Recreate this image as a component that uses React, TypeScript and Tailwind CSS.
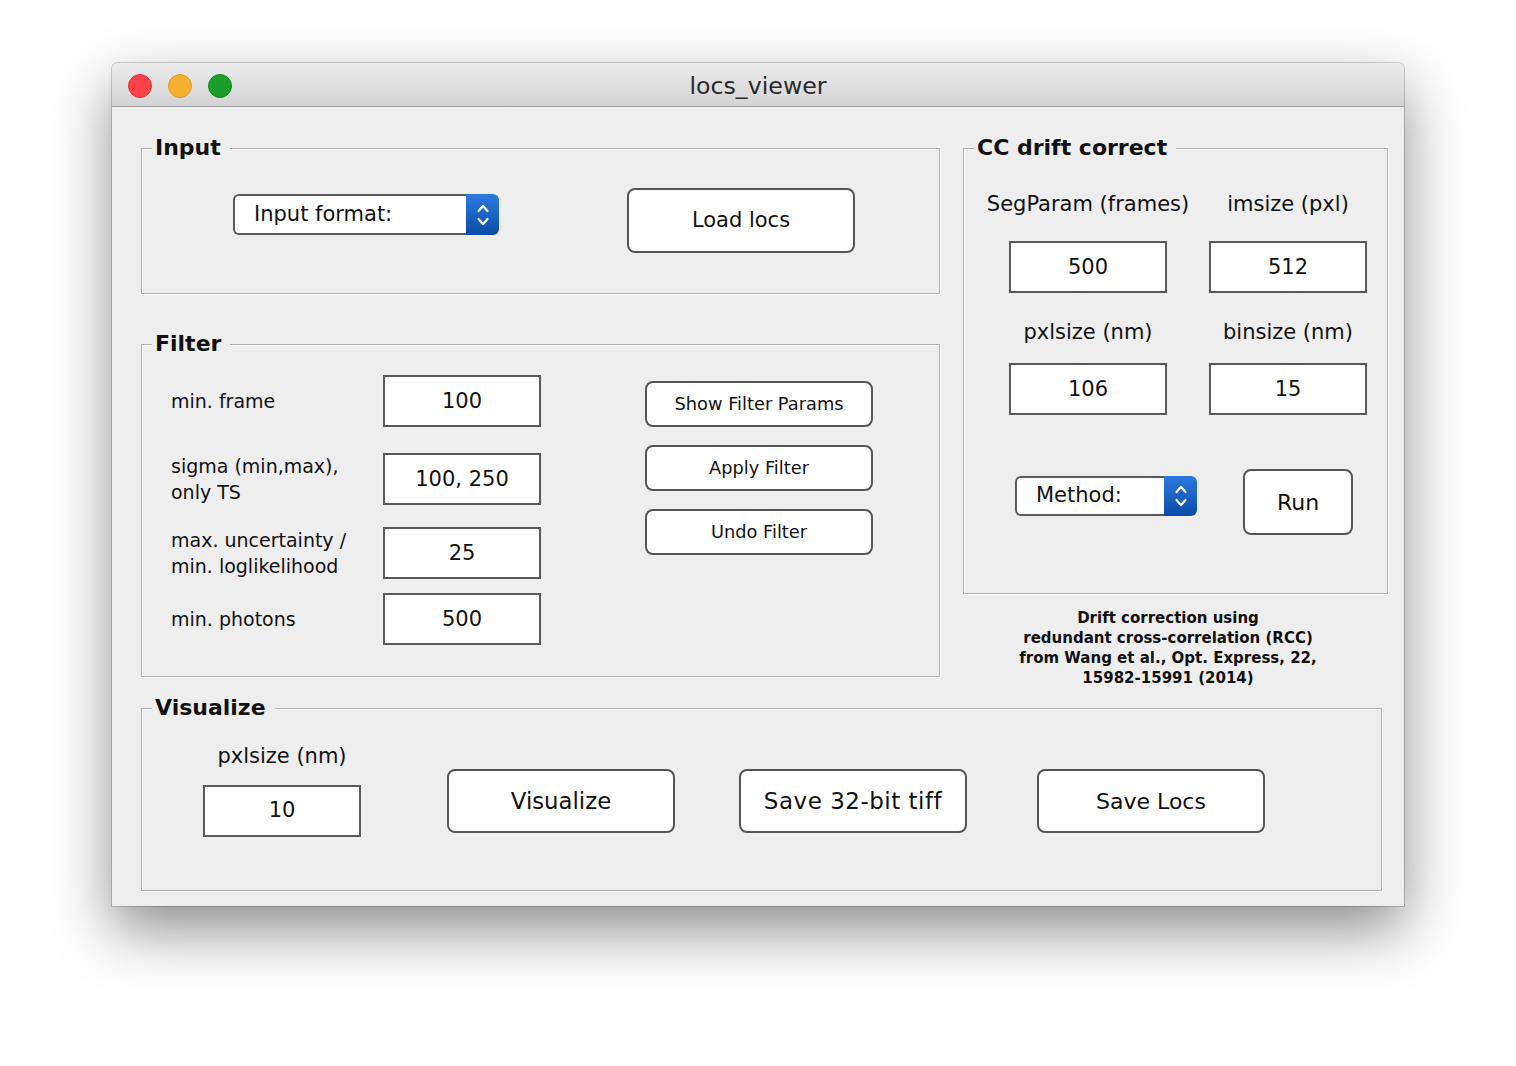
import React from 'react';

const font = { fontFamily: '"DejaVu Sans", Verdana, sans-serif' };

const Group: React.FC<{ title: string; className?: string; children?: React.ReactNode }> = ({ title, className = '', children }) => (
  <div className={`relative border border-[#b0b0b0] shadow-[inset_1px_1px_0_#ffffff,1px_1px_0_#ffffff] ${className}`}>
    <span className="absolute -top-[15px] left-[10px] bg-[#eeeeee] pl-[3px] pr-[9px] text-[22px] font-bold leading-[28px] text-[#111]">
      {title}
    </span>
    {children}
  </div>
);

const Field: React.FC<{ value: string; className?: string }> = ({ value, className = '' }) => (
  <div className={`flex h-[52px] w-[158px] items-center justify-center border-2 border-[#595959] bg-white text-[21px] text-[#111] ${className}`}>
    {value}
  </div>
);

const Button: React.FC<{ label: string; className?: string }> = ({ label, className = '' }) => (
  <div className={`flex w-[228px] items-center justify-center rounded-[8px] border-2 border-[#555] bg-white text-[#111] ${className}`}>
    {label}
  </div>
);

const Combo: React.FC<{ label: string; className?: string }> = ({ label, className = '' }) => (
  <div className={`flex ${className}`}>
    <div className="flex flex-1 items-center rounded-l-[6px] border-2 border-r-0 border-[#5a5a5a] bg-white pl-[19px] text-[21px] text-[#111]">
      {label}
    </div>
    <div className="flex w-[33px] items-center justify-center rounded-r-[6px] bg-gradient-to-b from-[#2d7ae0] to-[#0a4ca6]">
      <svg width="14" height="26" viewBox="0 0 14 26" fill="none" stroke="#fff" strokeWidth="2.2" strokeLinecap="round" strokeLinejoin="round">
        <path d="M2.5 9 L7 4 L11.5 9" />
        <path d="M2.5 17 L7 22 L11.5 17" />
      </svg>
    </div>
  </div>
);

export default function App() {
  return (
    <div className="min-h-screen bg-white pl-[112px] pt-[63px]" style={font}>
      <div className="h-[843px] w-[1292px] overflow-hidden rounded-t-[6px] bg-[#eeeeee] shadow-[0_24px_60px_rgba(0,0,0,0.45),0_0_0_1px_rgba(0,0,0,0.18)]">
        {/* title bar */}
        <div className="relative flex h-[44px] items-center justify-center border-b border-[#9e9e9e] bg-gradient-to-b from-[#ececec] to-[#d4d4d4]">
          <div className="absolute left-[16px] top-[11px] flex gap-[16px]">
            <span className="h-[24px] w-[24px] rounded-full border border-[#e0363b] bg-[#fc4248]" />
            <span className="h-[24px] w-[24px] rounded-full border border-[#d99a25] bg-[#f6b02e]" />
            <span className="h-[24px] w-[24px] rounded-full border border-[#138b20] bg-[#1b9f2a]" />
          </div>
          <span className="pt-[5px] text-[23.7px] text-[#2a2a2a]">locs_viewer</span>
        </div>

        <div className="pl-[29px] pt-[41px]">
          <div className="flex h-[529px] items-start">
            {/* left column */}
            <div className="flex w-[799px] flex-col">
              <Group title="Input" className="flex h-[146px] items-start pl-[91px] pt-[39px]">
                <Combo label="Input format:" className="mt-[6px] h-[41px] w-[266px]" />
                <Button label="Load locs" className="ml-[128px] h-[65px] text-[21px]" />
              </Group>

              <Group title="Filter" className="mt-[50px] flex h-[333px] items-start">
                <div className="ml-[29px] flex flex-col pt-[30px] text-[19px] leading-[26px] text-[#111]">
                  <div className="flex items-center">
                    <div className="w-[212px]">min. frame</div>
                    <Field value="100" />
                  </div>
                  <div className="mt-[26px] flex items-center">
                    <div className="w-[212px]">
                      sigma (min,max),
                      <br />
                      only TS
                    </div>
                    <Field value="100, 250" />
                  </div>
                  <div className="mt-[22px] flex items-center">
                    <div className="w-[212px]">
                      max. uncertainty /
                      <br />
                      min. loglikelihood
                    </div>
                    <Field value="25" />
                  </div>
                  <div className="mt-[14px] flex items-center">
                    <div className="w-[212px]">min. photons</div>
                    <Field value="500" />
                  </div>
                </div>
                <div className="ml-[104px] flex flex-col gap-[18px] pt-[36px] text-[17.8px]">
                  <Button label="Show Filter Params" className="h-[46px]" />
                  <Button label="Apply Filter" className="h-[46px]" />
                  <Button label="Undo Filter" className="h-[46px]" />
                </div>
              </Group>
            </div>

            {/* right column */}
            <div className="ml-[23px] flex w-[425px] flex-col">
              <Group title="CC drift correct" className="h-[446px] pl-[45px] pt-[42px]">
                <div className="grid grid-cols-[158px_158px] gap-x-[42px] text-[21px] leading-[26px] text-[#111]">
                  <div className="flex justify-center whitespace-nowrap">SegParam (frames)</div>
                  <div className="flex justify-center whitespace-nowrap">imsize (pxl)</div>
                  <Field value="500" className="mt-[24px]" />
                  <Field value="512" className="mt-[24px]" />
                  <div className="mt-[26px] flex justify-center whitespace-nowrap">pxlsize (nm)</div>
                  <div className="mt-[26px] flex justify-center whitespace-nowrap">binsize (nm)</div>
                  <Field value="106" className="mt-[18px]" />
                  <Field value="15" className="mt-[18px]" />
                </div>
                <div className="ml-[6px] mt-[54px] flex items-start">
                  <Combo label="Method:" className="mt-[7px] h-[40px] w-[182px]" />
                  <Button label="Run" className="ml-[46px] h-[66px] !w-[110px] text-[22px]" />
                </div>
              </Group>
              <div className="mt-[14px] pr-[15px] text-center text-[15px] font-bold leading-[20px] text-[#111]">
                Drift correction using
                <br />
                redundant cross-correlation (RCC)
                <br />
                from Wang et al., Opt. Express, 22,
                <br />
                15982-15991 (2014)
              </div>
            </div>
          </div>

          <Group title="Visualize" className="mt-[31px] flex h-[183px] w-[1241px] items-start pl-[61px]">
            <div className="flex flex-col items-center pt-[34px]">
              <div className="text-[21px] leading-[26px] text-[#111]">pxlsize (nm)</div>
              <Field value="10" className="mt-[16px]" />
            </div>
            <Button label="Visualize" className="ml-[86px] mt-[60px] h-[64px] text-[22.8px]" />
            <Button label="Save 32-bit tiff" className="ml-[64px] mt-[60px] h-[64px] text-[23px] tracking-[0.5px]" />
            <Button label="Save Locs" className="ml-[70px] mt-[60px] h-[64px] text-[22px]" />
          </Group>
        </div>
      </div>
    </div>
  );
}
